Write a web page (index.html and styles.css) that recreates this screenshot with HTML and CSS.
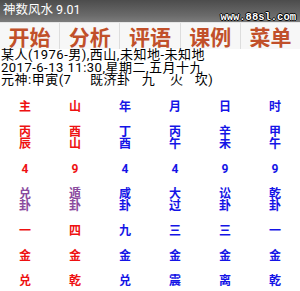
FILE: index.html
```html
<!DOCTYPE html>
<html lang="zh">
<head>
<meta charset="utf-8">
<link rel="stylesheet" href="styles.css">
</head>
<body>
<div class="app">
  <header class="titlebar">
    <span class="title">神数风水 9.01</span>
    <span class="watermark">www.88sl.com</span>
  </header>
  <nav class="menu">
    <div class="btn">开始</div>
    <div class="btn">分析</div>
    <div class="btn">评语</div>
    <div class="btn">课例</div>
    <div class="btn last">菜单</div>
  </nav>
  <div class="info">
    <div class="line">某人(1976-男),西山,未知地-未知地</div>
    <div class="line">2017-6-13 11:30,星期二,五月十九</div>
    <div class="line pre">元神:甲寅(7     既济卦   九    火   坎)</div>
  </div>
  <div class="grid">
    <div class="c r">主</div><div class="c r">山</div><div class="c b">年</div><div class="c b">月</div><div class="c b">日</div><div class="c b">时</div>
    <div class="c r">丙<br>辰</div><div class="c r">酉<br>山</div><div class="c b">丁<br>酉</div><div class="c b">丙<br>午</div><div class="c b">辛<br>未</div><div class="c b">甲<br>午</div>
    <div class="c r">4</div><div class="c r">9</div><div class="c b">4</div><div class="c b">4</div><div class="c b">9</div><div class="c b">9</div>
    <div class="c p">兑<br>卦</div><div class="c p">遁<br>卦</div><div class="c b">咸<br>卦</div><div class="c b">大<br>过</div><div class="c b">讼<br>卦</div><div class="c b">乾<br>卦</div>
    <div class="c r">一</div><div class="c r">四</div><div class="c b">九</div><div class="c b">三</div><div class="c b">三</div><div class="c b">一</div>
    <div class="c r">金</div><div class="c r">金</div><div class="c b">金</div><div class="c b">金</div><div class="c b">金</div><div class="c b">金</div>
    <div class="c r">兑</div><div class="c r">乾</div><div class="c b">兑</div><div class="c b">震</div><div class="c b">离</div><div class="c b">乾</div>
  </div>
</div>
</body>
</html>
```
FILE: styles.css
```css
html, body {
  margin: 0;
  padding: 0;
  background: #ffffff;
}
body {
  font-family: Roboto, "Noto Sans CJK SC", sans-serif;
  width: 300px;
  height: 291px;
  overflow: hidden;
}
.app {
  position: relative;
  width: 300px;
}
.titlebar {
  height: 22px;
  background: linear-gradient(#4c4c4c, #6a6a6a 70%, #7c7c7c);
  display: flex;
  align-items: center;
  padding-left: 3px;
  box-sizing: border-box;
}
.title {
  color: #ffffff;
  font-size: 12.5px;
  line-height: 14px;
  margin-top: -2px;
}
.watermark {
  position: absolute;
  right: 4px;
  top: 11px;
  font-family: "Liberation Mono", monospace;
  font-weight: bold;
  font-size: 10.5px;
  line-height: 12px;
  color: #ffffff;
  text-shadow: 1px 0 0 #000, -1px 0 0 #000, 0 1px 0 #000, 0 -1px 0 #000;
}
.menu {
  height: 27px;
  display: flex;
  background: #f7f7f7;
  border-top: 1px solid #e6e6e6;
  box-sizing: border-box;
}
.btn {
  flex: 1;
  display: flex;
  align-items: center;
  justify-content: center;
  color: #c1502a;
  font-size: 21px;
  line-height: 24px;
  font-weight: bold;
  border-right: 1px solid #dddddd;
  font-family: "Noto Sans CJK SC", sans-serif;
}
.btn.last {
  border-right: none;
}
.info {
  font-size: 13px;
  line-height: 12.5px;
  letter-spacing: 0.5px;
  color: #000000;
  padding-left: 1px;
}
.line {
  white-space: nowrap;
}
.pre {
  white-space: pre;
}
.grid {
  display: grid;
  grid-template-columns: repeat(6, 50px);
  row-gap: 13px;
  margin-top: 14px;
  font-size: 12px;
  line-height: 12px;
  font-weight: bold;
}
.c {
  text-align: center;
}
.r { color: #ee1111; }
.b { color: #1414e6; }
.p { color: #8a4a9e; }
```
